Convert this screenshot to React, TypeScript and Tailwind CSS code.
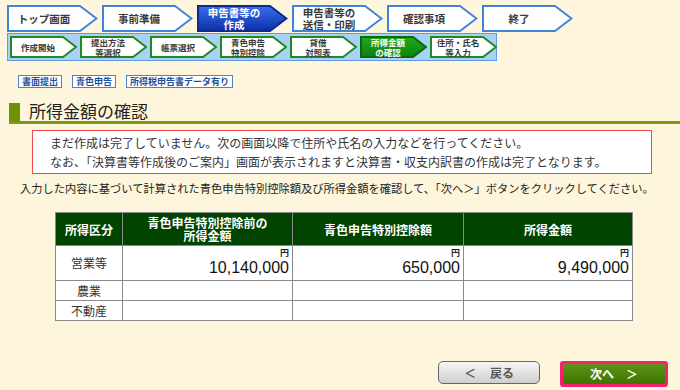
import React from "react";

const TOP_STEPS = [
  { label: ["トップ画面"] },
  { label: ["事前準備"] },
  { label: ["申告書等の", "作成"], active: true },
  { label: ["申告書等の", "送信・印刷"] },
  { label: ["確認事項"] },
  { label: ["終了"] },
];

const SUB_STEPS = [
  { label: ["作成開始"] },
  { label: ["提出方法", "等選択"] },
  { label: ["帳票選択"] },
  { label: ["青色申告", "特別控除"] },
  { label: ["貸借", "対照表"] },
  { label: ["所得金額", "の確認"], active: true },
  { label: ["住所・氏名", "等入力"] },
];

const ROWS = [
  { name: "営業等", before: "10,140,000", deduction: "650,000", income: "9,490,000" },
  { name: "農業" },
  { name: "不動産" },
];

const TopArrow = ({ label, active }: { label: string[]; active?: boolean }) => (
  <div className="relative h-[27px] w-[91px] shrink-0">
    <svg className="absolute inset-0" width="91" height="27" viewBox="0 0 91 27">
      <defs>
        <linearGradient id="topActive" x1="0" y1="0" x2="0" y2="1">
          <stop offset="0" stopColor="#3a6ef0" />
          <stop offset="1" stopColor="#0c2ea8" />
        </linearGradient>
      </defs>
      <polygon
        points="1,1 73,1 89.5,13.5 73,26 1,26"
        fill={active ? "url(#topActive)" : "#ffffff"}
        stroke={active ? "#0b2a8c" : "#3f83dc"}
        strokeWidth="2"
      />
    </svg>
    <div
      className={`relative flex h-full w-[74px] flex-col items-center justify-center text-[10.5px] font-bold leading-[12px] ${
        active ? "text-white" : "text-[#3a3a3a]"
      }`}
    >
      {label.map((l) => (
        <span key={l}>{l}</span>
      ))}
    </div>
  </div>
);

const SubArrow = ({ label, active }: { label: string[]; active?: boolean }) => (
  <div className="relative h-[22px] w-[67px] shrink-0">
    <svg className="absolute inset-0" width="67" height="22" viewBox="0 0 67 22">
      <defs>
        <linearGradient id="subActive" x1="0" y1="0" x2="0" y2="1">
          <stop offset="0" stopColor="#22aa22" />
          <stop offset="1" stopColor="#0c800c" />
        </linearGradient>
      </defs>
      <polygon
        points="1,1 53,1 66,11 53,21 1,21"
        fill={active ? "url(#subActive)" : "#ffffff"}
        stroke={active ? "#0a6a0a" : "#1f8a1f"}
        strokeWidth="2"
      />
    </svg>
    <div
      className={`relative flex h-full w-[56px] flex-col items-center justify-center text-[8.5px] font-bold leading-[10px] ${
        active ? "text-white" : "text-[#3a3a3a]"
      }`}
    >
      {label.map((l) => (
        <span key={l} className="block h-[10px] leading-[10px]">
          {l}
        </span>
      ))}
    </div>
  </div>
);

const Tag = ({ children }: { children: React.ReactNode }) => (
  <span className="flex h-[13px] items-center border border-[#4a82cc] bg-white px-[3px] text-[9px] font-bold leading-none text-[#1f4f9a]">
    {children}
  </span>
);

const Amount = ({ value }: { value?: string }) => (
  <td className="border border-[#8a8a8a] bg-white px-[3px] text-right align-top">
    {value && (
      <div className="flex flex-col items-end">
        <span className="pt-[2px] text-[9px] font-bold leading-[10px] text-[#222]">円</span>
        <span className="font-['Liberation_Sans',sans-serif] text-[16px] leading-[19px] text-[#111]">{value}</span>
      </div>
    )}
  </td>
);

export default function App() {
  return (
    <div className="h-[390px] w-[680px] overflow-hidden bg-[#fef6dc] font-['Noto_Sans_CJK_JP',sans-serif] text-[#333]">
      {/* main steps */}
      <div className="flex gap-[4px] pl-[7px] pt-[5px]">
        {TOP_STEPS.map((s) => (
          <TopArrow key={s.label.join()} label={s.label} active={s.active} />
        ))}
      </div>

      {/* sub steps */}
      <div className="ml-[7px] mt-[1px] flex h-[28px] w-[490px] items-center gap-[3px] border border-[#5d9ce2] bg-[#a9d0f7] pl-[2px]">
        {SUB_STEPS.map((s) => (
          <SubArrow key={s.label.join()} label={s.label} active={s.active} />
        ))}
      </div>

      {/* tags */}
      <div className="ml-[18px] mt-[14px] flex gap-[10px]">
        <Tag>書面提出</Tag>
        <Tag>青色申告</Tag>
        <Tag>所得税申告書データ有り</Tag>
      </div>

      {/* title */}
      <div className="ml-[9px] mt-[13px] flex items-end border-b-[3px] border-[#7a9c0c]">
        <div className="h-[18px] w-[11px] bg-[#6e9200]" />
        <h1 className="ml-[9px] text-[17px] leading-[20px] text-[#222]">所得金額の確認</h1>
      </div>

      {/* notice */}
      <div className="ml-[32px] mt-[6px] w-[620px] border border-[#f04a4a] bg-white py-[2px] pl-[17px] text-[12px] leading-[19px] text-[#333]">
        <p>まだ作成は完了していません。次の画面以降で住所や氏名の入力などを行ってください。</p>
        <p>なお、「決算書等作成後のご案内」画面が表示されますと決算書・収支内訳書の作成は完了となります。</p>
      </div>

      <p className="ml-[20px] mt-[6px] text-[11.25px] leading-[16px] text-[#222]">
        入力した内容に基づいて計算された青色申告特別控除額及び所得金額を確認して、「次へ＞」ボタンをクリックしてください。
      </p>

      {/* table */}
      <table className="ml-[55px] mt-[16px] w-[578px] border-collapse">
        <thead>
          <tr className="h-[33px] bg-[#004400] text-[12px] font-bold leading-[13px] text-white">
            <th className="w-[67px] border border-[#8a8a8a]">所得区分</th>
            <th className="w-[170px] border border-[#8a8a8a]">
              青色申告特別控除前の
              <br />
              所得金額
            </th>
            <th className="w-[171px] border border-[#8a8a8a]">青色申告特別控除額</th>
            <th className="border border-[#8a8a8a]">所得金額</th>
          </tr>
        </thead>
        <tbody>
          {ROWS.map((r) => (
            <tr key={r.name} className={r.before ? "h-[35px]" : "h-[20px]"}>
              <td className="border border-[#8a8a8a] bg-white text-center text-[12px] leading-[14px] text-[#333]">
                {r.name}
              </td>
              <Amount value={r.before} />
              <Amount value={r.deduction} />
              <Amount value={r.income} />
            </tr>
          ))}
        </tbody>
      </table>

      {/* buttons */}
      <div className="mt-[40px] flex justify-end gap-[20px] pr-[12px]">
        <button className="flex h-[23px] w-[102px] items-center justify-center gap-[14px] rounded-[5px] border border-[#666] bg-gradient-to-b from-[#f6f6f6] to-[#cfcfcf] text-[12px] font-bold text-[#555]">
          <span>＜</span>
          <span>戻る</span>
        </button>
        <div className="rounded-[3px] border-[3px] border-[#f5206e] bg-[#f5206e]">
          <button className="flex h-[20px] w-[102px] items-center justify-center gap-[12px] bg-gradient-to-b from-[#5e9218] to-[#3f7400] text-[12px] font-bold text-white">
            <span>次へ</span>
            <span>＞</span>
          </button>
        </div>
      </div>
    </div>
  );
}
